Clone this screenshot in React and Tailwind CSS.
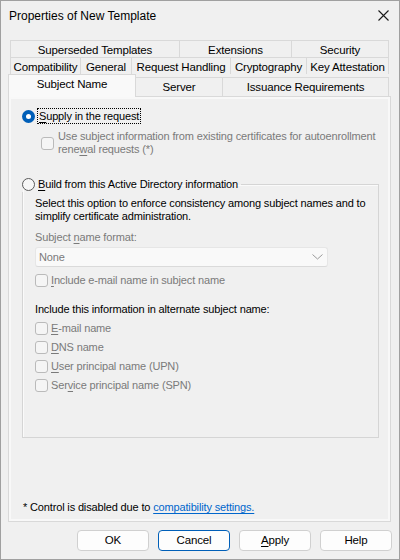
import React from "react";

const F = { fontFamily: '"Liberation Sans", Arial, sans-serif' };

function U({ children }) {
  return <span className="underline underline-offset-[2px]">{children}</span>;
}

function Check({ className = "" }) {
  return (
    <span
      className={
        "inline-block w-[13px] h-[13px] shrink-0 rounded-[3px] border border-[#bababa] bg-[#f5f5f5] " +
        className
      }
    />
  );
}

function Radio({ checked }) {
  if (checked) {
    return (
      <span className="flex w-[13px] h-[13px] shrink-0 rounded-full bg-[#005fb8] items-center justify-center">
        <span className="w-[5px] h-[5px] rounded-full bg-white" />
      </span>
    );
  }
  return (
    <span className="inline-block w-[13px] h-[13px] shrink-0 rounded-full border border-[#5a5a5a] bg-[#f7f7f7]" />
  );
}

function Tab({ w, className = "", children }) {
  return (
    <div
      className={
        "flex items-center justify-center border-[#d9d9d9] bg-[#f0f0f0] whitespace-nowrap " +
        w +
        " " +
        className
      }
    >
      {children}
    </div>
  );
}

function CheckRow({ children }) {
  return (
    <div className="flex items-center h-[19px] gap-[3px] text-[#7a7a7a]">
      <Check />
      <span>{children}</span>
    </div>
  );
}

function Btn({ children, def }) {
  return (
    <button
      className={
        "w-[72px] h-[21px] rounded-[4px] bg-[#fdfdfd] text-black leading-none border " +
        (def ? "border-[#005fb8]" : "border-[#d0d0d0]")
      }
    >
      {children}
    </button>
  );
}

export default function App() {
  return (
    <div
      style={F}
      className="w-[400px] h-[560px] bg-[#f0f0f0] border border-[#a0a0a0] text-[11px] tracking-[-0.15px] text-black flex flex-col overflow-hidden"
    >
      {/* Title bar */}
      <div className="h-[29px] flex items-center justify-between pl-[8px] pr-[10px] shrink-0">
        <span className="text-[12px] tracking-normal">Properties of New Template</span>
        <svg width="11" height="11" viewBox="0 0 11 11">
          <path d="M0.5 0.5 L10.5 10.5 M10.5 0.5 L0.5 10.5" stroke="#1a1a1a" strokeWidth="1.1" />
        </svg>
      </div>

      {/* Tabs */}
      <div className="ml-[7px] mt-[10px] w-[382px] flex flex-col shrink-0 leading-none text-[11.5px]">
        <div className="flex ml-[2px] h-[17px]">
          <Tab w="w-[170px] pt-[3px]" className="border-l border-t border-r">Superseded Templates</Tab>
          <Tab w="w-[112px] pt-[3px]" className="border-t border-r">Extensions</Tab>
          <Tab w="w-[97px] pt-[3px]" className="border-t border-r">Security</Tab>
        </div>
        <div className="flex ml-[2px] h-[17px]">
          <Tab w="w-[71px] pt-[3px]" className="border-l border-t border-r">Compatibility</Tab>
          <Tab w="w-[51px] pt-[3px]" className="border-t border-r">General</Tab>
          <Tab w="w-[99px] pt-[3px]" className="border-t border-r">Request Handling</Tab>
          <Tab w="w-[76px] pt-[3px]" className="border-t border-r">Cryptography</Tab>
          <Tab w="w-[82px] pt-[3px]" className="border-t border-r">Key Attestation</Tab>
        </div>
        <div className="flex items-end h-[22px]">
          <div className="relative z-10 w-[128px] h-[23px] -mb-px flex items-start justify-center pt-[4px] border-l border-t border-r border-[#d9d9d9] bg-[#f9f9f9] whitespace-nowrap">
            Subject Name
          </div>
          <Tab w="w-[87px] h-[19px] pt-[2px]" className="border-t border-r">Server</Tab>
          <Tab w="w-[166px] h-[19px] pt-[2px]" className="border-t border-r">Issuance Requirements</Tab>
        </div>

        {/* Panel */}
        <div className="w-[383px] h-[426px] border border-[#d9d9d9] bg-[#f0f0f0] shadow-[inset_0_0_0_2px_#f8f8f8] flex flex-col pl-[13px] pt-[11px] pb-[7px] text-[11px] leading-normal">
          <div className="flex items-center h-[16px] gap-[2px]">
            <Radio checked />
            <span className="border border-dotted border-black px-[1px] leading-[14px] h-[16px]">
              <U>S</U>upply in the request
            </span>
          </div>

          <div className="flex items-center ml-[19px] mt-[6px] gap-[4px] text-[#7a7a7a] leading-[13px] whitespace-nowrap">
            <Check />
            <span>
              Use subject information from existing certificates for autoenrollment
              <br />
              rene<U>w</U>al requests (*)
            </span>
          </div>

          <fieldset className="mt-[20px] w-[357px] h-[262px] border border-[#d5d5d5] shadow-[inset_1px_1px_0_#fafafa]">
            <legend className="pr-[3px] ml-[-1px]">
              <div className="flex items-center h-[16px] gap-[3px]">
                <Radio />
                <span>
                  <U>B</U>uild from this Active Directory information
                </span>
              </div>
            </legend>
            <div className="pl-[12px] flex flex-col leading-[13px]">
              <div className="mt-[5px] whitespace-nowrap">
                Select this option to enforce consistency among subject names and to
                <br />
                simplify certificate administration.
              </div>
              <div className="mt-[8px] text-[#7a7a7a]">
                Subject <U>n</U>ame format:
              </div>
              <div className="mt-[3px] w-[293px] h-[20px] rounded-[3px] bg-[#f9f9f9] border border-[#e6e6e6] border-b-[#dadada] flex items-center justify-between pl-[3px] pr-[4px] text-[#7a7a7a]">
                <span>None</span>
                <svg width="11" height="6" viewBox="0 0 11 6">
                  <path d="M0.5 0.5 L5.5 5 L10.5 0.5" fill="none" stroke="#9a9a9a" strokeWidth="1" />
                </svg>
              </div>
              <div className="mt-[5px] flex items-center h-[16px] gap-[3px] text-[#7a7a7a]">
                <Check />
                <span>
                  <U>I</U>nclude e-mail name in subject name
                </span>
              </div>
              <div className="mt-[15px]">Include this information in alternate subject name:</div>
              <div className="mt-[3px] flex flex-col">
                <CheckRow>
                  <U>E</U>-mail name
                </CheckRow>
                <CheckRow>
                  <U>D</U>NS name
                </CheckRow>
                <CheckRow>
                  <U>U</U>ser principal name (UPN)
                </CheckRow>
                <CheckRow>
                  Ser<U>v</U>ice principal name (SPN)
                </CheckRow>
              </div>
            </div>
          </fieldset>

          <div className="mt-auto ml-[1px] leading-[13px]">
            * Control is disabled due to{" "}
            <span className="text-[#0066cc] underline underline-offset-[2px]">compatibility settings.</span>
          </div>
        </div>
      </div>

      {/* Buttons */}
      <div className="flex justify-end gap-[9px] mt-[8px] pr-[7px] text-[11.5px]">
        <Btn>OK</Btn>
        <Btn def>Cancel</Btn>
        <Btn>
          <U>A</U>pply
        </Btn>
        <Btn>Help</Btn>
      </div>
    </div>
  );
}
